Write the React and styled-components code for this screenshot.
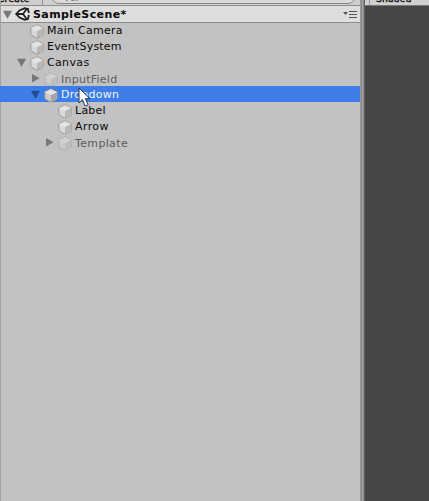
import React from "react";
import styled, { createGlobalStyle } from "styled-components";

const Global = createGlobalStyle`
  * { box-sizing: border-box; }
  body { margin: 0; background: #c2c2c2; overflow: hidden; }
`;
const Window = styled.div`
  position: relative;
  display: flex;
  width: 429px;
  height: 501px;
  overflow: hidden;
  font: 11px/16px "DejaVu Sans", Verdana, sans-serif;
  color: #080808;
  white-space: pre;
`;
const Hierarchy = styled.section`
  width: 361px;
  height: 501px;
  display: flex;
  flex-direction: column;
  background: #c2c2c2;
  border-left: 1px solid #a2a2a2;
  border-right: 1px solid #999;
`;
const Toolbar = styled.div`
  height: 6px;
  display: flex;
  overflow: hidden;
  background: #cfcfcf;
  border-bottom: 1px solid #8d8d8d;
  font-size: 9px;
  line-height: 10px;
`;
const Create = styled.div`
  width: 42px;
  height: 5px;
  border-right: 1px solid #969696;
`;
const Clipped = styled.span`
  display: block;
  margin-top: -6px;
  margin-left: ${(p) => p.$indent || 0}px;
  letter-spacing: ${(p) => p.$tracking || 0}px;
  -webkit-text-stroke: 0.35px #080808;
`;
const Search = styled.div`
  width: 305px;
  height: 16px;
  margin: -12px 0 0 8px;
  padding: 4px 0 0 14px;
  border: 1px solid #858585;
  border-radius: 8px;
  background: #dadada;
  color: #555;
  font-size: 10px;
`;
const SceneHeader = styled.header`
  height: 17px;
  flex: none;
  display: flex;
  align-items: center;
  background: #dedede;
  border-bottom: 1px solid #8f8f8f;
  padding: 0 3px 0 1px;
`;
const SceneName = styled.strong`
  position: relative;
  top: 1px;
  margin-left: 3px;
  flex: 1;
  letter-spacing: 0.4px;
`;
const Tree = styled.div`
  display: flex;
  flex-direction: column;
  margin-top: -1px;
`;
const Row = styled.div`
  height: 16px;
  margin-left: ${(p) => (p.$selected ? -1 : 0)}px;
  display: flex;
  align-items: center;
  padding-left: ${(p) => (p.$selected ? 1 : 0) + 1 + p.$depth * 14}px;
  color: ${(p) => (p.$selected ? "#f4f7ff" : p.$inactive ? "#5b5b5b" : "#080808")};
  background: ${(p) => (p.$selected ? "#3d7de7" : "transparent")};
`;
const Name = styled.span`
  margin-left: 3px;
  position: relative;
  top: ${(p) => (p.$inactive ? 2 : 1)}px;
  letter-spacing: ${(p) => p.$tracking ?? 0.25}px;
`;
const Divider = styled.div`
  width: 4px;
  background: linear-gradient(90deg, #858585 0 1px, #a4a4a4 1px 2px, #8b8b8b 2px 3px, #606060 3px);
`;
const SceneView = styled.section`
  flex: 1;
  background: #464646;
`;
const ViewToolbar = styled.div`
  height: 6px;
  overflow: hidden;
  display: flex;
  background: #cfcfcf;
  border-bottom: 1px solid #777;
  font-size: 9px;
  line-height: 10px;
`;
const ViewMode = styled.div`
  flex: 1;
  margin-left: 4px;
  border-left: 1px solid #969696;
`;
const Icon = styled.svg`
  display: block;
  flex: none;
  overflow: visible;
  opacity: ${(p) => (p.$inactive ? 0.45 : 1)};
`;
const CubeIcon = styled(Icon)`
  position: relative;
  top: 1px;
`;
const Pointer = styled(Icon)`
  position: absolute;
  left: 78px;
  top: 87px;
`;

function Fold({ closed, selected }) {
  return (
    <Icon width="12" height="14" viewBox="0 0 12 14">
      <path d={closed ? "M2 3 9.7 7.3 2 11.6Z" : "M1 3.8h9L5.5 11.8Z"} fill={selected ? "#264c90" : "#777"} />
    </Icon>
  );
}
function Cube({ inactive, selected }) {
  return (
    <CubeIcon width="14" height="15" viewBox="0 0 14 15" $inactive={inactive}>
      <path d="M7 .8 13.2 3.7v7.2L7 14.3.8 10.9V3.7Z" fill={selected ? "#c9c9c9" : "#d8d8d8"} stroke="#8e8e8e" strokeWidth=".8" />
      <path d="M7 1.2 12.8 3.9 7 6.7 1.2 3.9Z" fill="#e2e2e2" />
      <path d="M7 6.7 12.8 3.9v6.8L7 13.9Z" fill={selected ? "#a5a5a5" : "#b7b7b7"} />
      <path d="M1.3 4 7 6.7 12.7 4" fill="none" stroke="#efefef" strokeWidth=".6" />
    </CubeIcon>
  );
}

const items = [
  { name: "Main Camera", depth: 1, tracking: 0.25 },
  { name: "EventSystem", depth: 1, tracking: 0.2 },
  { name: "Canvas", depth: 1, fold: "open", tracking: 0.35 },
  { name: "InputField", depth: 2, fold: "closed", inactive: true },
  { name: "Dropdown", depth: 2, fold: "open", selected: true },
  { name: "Label", depth: 3 },
  { name: "Arrow", depth: 3, tracking: 0.4 },
  { name: "Template", depth: 3, fold: "closed", inactive: true, tracking: 0.35 },
];

const FoldSlot = styled.div`
  width: 14px;
  flex: none;
`;

export default function App() {
  return (
    <Window>
      <Global />
      <Hierarchy>
        <Toolbar>
          <Create><Clipped $indent={-3} $tracking={0.3}>Create</Clipped></Create>
          <Search>All</Search>
        </Toolbar>
        <SceneHeader>
          <Fold />
          <Icon width="16" height="14" viewBox="0 0 16 14">
            <path d="M2 7 10.5 1.3 14.5 2.2v9.6l-4 .9Z" fill="#efefef" />
            <path d="M11 1.1 5.5 3.4 2.2 7l3.3 3.6L11 12.9M10 1l4 1 .8 4M10 13l4-1 .8-4M3 7h6M9 7l3.7-5M9 7l3.7 5" fill="none" stroke="#202020" strokeWidth="1.8" />
          </Icon>
          <SceneName>SampleScene*</SceneName>
          <Icon width="14" height="8" viewBox="0 0 14 8">
            <path d="M0 2h5L2.5 5Z" fill="#555" />
            <path d="M6 1.5h8M6 4.5h8M6 7.5h8" stroke="#555" />
          </Icon>
        </SceneHeader>
        <Tree>
          {items.map((item) => (
            <Row key={item.name} $depth={item.depth} $selected={item.selected} $inactive={item.inactive}>
              <FoldSlot>{item.fold && <Fold closed={item.fold === "closed"} selected={item.selected} />}</FoldSlot>
              <Cube inactive={item.inactive} selected={item.selected} />
              <Name $inactive={item.inactive} $tracking={item.tracking}>{item.name}</Name>
            </Row>
          ))}
        </Tree>
      </Hierarchy>
      <Divider />
      <SceneView>
        <ViewToolbar><ViewMode><Clipped $indent={6} $tracking={0.3}>Shaded</Clipped></ViewMode></ViewToolbar>
      </SceneView>
      <Pointer width="14" height="21" viewBox="0 0 14 21">
        <path d="M1 1v15l3.5-3.3L7.2 19l3-1.3-2.8-6H12Z" fill="#fff" stroke="#24334f" />
      </Pointer>
    </Window>
  );
}
